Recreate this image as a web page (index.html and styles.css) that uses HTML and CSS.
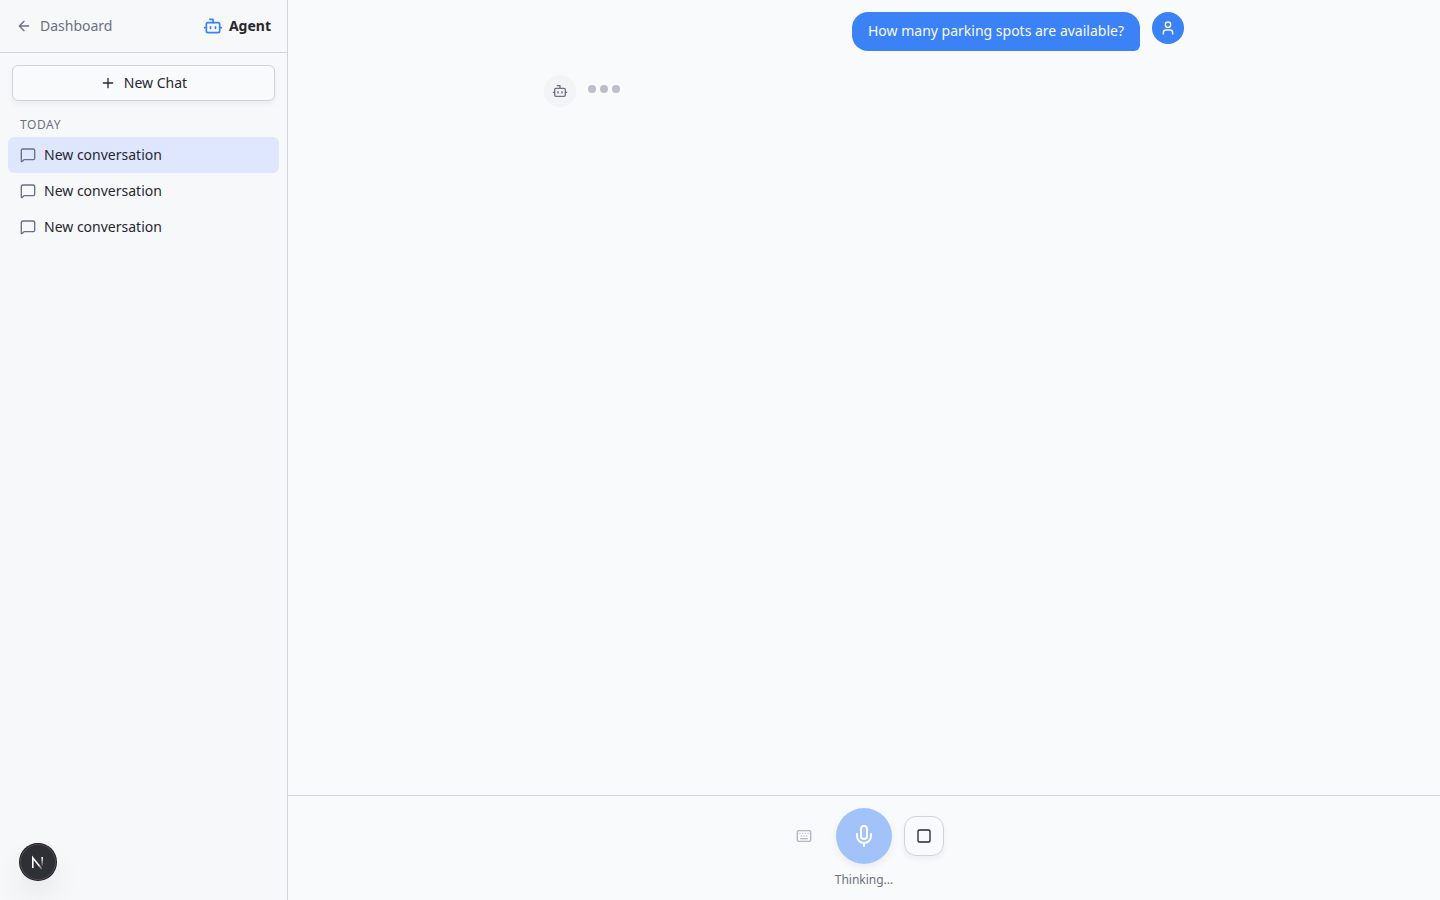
FILE: index.html
```html
<!DOCTYPE html>
<html lang="en">
<head>
<meta charset="utf-8">
<meta name="viewport" content="width=device-width, initial-scale=1">
<title>Agent</title>
<link rel="stylesheet" href="styles.css">
</head>
<body>
<svg class="sprite" aria-hidden="true">
  <symbol id="bot" viewBox="0 0 24 24"><path d="M12 8V4H8"/><rect width="16" height="12" x="4" y="8" rx="2"/><path d="M2 14h2M20 14h2M15 13v2M9 13v2"/></symbol>
  <symbol id="chat" viewBox="0 0 24 24"><path d="M22 17a2 2 0 0 1-2 2H6.828a2 2 0 0 0-1.414.586l-2.202 2.202A.71.71 0 0 1 2 21.286V5a2 2 0 0 1 2-2h16a2 2 0 0 1 2 2z"/></symbol>
</svg>
<div class="app">
  <aside class="sidebar">
    <header class="sidebar-header">
      <a class="back" href="#">
        <svg class="icon" viewBox="0 0 24 24" aria-hidden="true"><path d="m12 19-7-7 7-7M19 12H5"/></svg>
        Dashboard
      </a>
      <div class="brand">
        <svg class="icon icon-brand" aria-hidden="true"><use href="#bot"/></svg>
        Agent
      </div>
    </header>
    <div class="new-chat-wrap">
      <button class="new-chat" type="button">
        <svg class="icon" viewBox="0 0 24 24" aria-hidden="true"><path d="M5 12h14M12 5v14"/></svg>
        New Chat
      </button>
    </div>
    <nav class="history" aria-label="Conversations">
      <h2 class="history-label">Today</h2>
      <button class="conversation active" type="button"><svg class="icon icon-chat" aria-hidden="true"><use href="#chat"/></svg>New conversation</button>
      <button class="conversation" type="button"><svg class="icon icon-chat" aria-hidden="true"><use href="#chat"/></svg>New conversation</button>
      <button class="conversation" type="button"><svg class="icon icon-chat" aria-hidden="true"><use href="#chat"/></svg>New conversation</button>
    </nav>
  </aside>
  <main class="main">
    <div class="scroll">
      <div class="thread">
        <div class="message message-user">
          <p class="bubble">How many parking spots are available?</p>
          <span class="avatar avatar-user">
            <svg class="icon" viewBox="0 0 24 24" aria-hidden="true"><circle cx="12" cy="7" r="4"/><path d="M19 21v-2a4 4 0 0 0-4-4H9a4 4 0 0 0-4 4v2"/></svg>
          </span>
        </div>
        <div class="message">
          <span class="avatar avatar-bot"><svg class="icon" aria-hidden="true"><use href="#bot"/></svg></span>
          <div class="dots"><span class="dot"></span><span class="dot"></span><span class="dot"></span></div>
        </div>
      </div>
    </div>
    <footer class="composer">
      <div class="controls">
        <button class="control keyboard" type="button" disabled aria-label="Use keyboard">
          <svg class="icon" viewBox="0 0 24 24" aria-hidden="true"><rect width="20" height="16" x="2" y="4" rx="2"/><path d="M10 8h.01M12 12h.01M14 8h.01M16 12h.01M18 8h.01M6 8h.01M7 16h10M8 12h.01"/></svg>
        </button>
        <button class="mic" type="button" disabled aria-label="Record">
          <svg class="icon icon-mic" viewBox="0 0 24 24" aria-hidden="true"><path d="M12 2a3 3 0 0 0-3 3v7a3 3 0 0 0 6 0V5a3 3 0 0 0-3-3Z"/><path d="M19 10v2a7 7 0 0 1-14 0v-2M12 19v3"/></svg>
        </button>
        <button class="control stop" type="button" aria-label="Stop">
          <svg class="icon" viewBox="0 0 24 24" aria-hidden="true"><rect width="18" height="18" x="3" y="3" rx="2"/></svg>
        </button>
      </div>
      <p class="status">Thinking...</p>
    </footer>
  </main>
</div>
<button class="dev-badge" type="button" aria-label="Open developer tools">
  <svg class="dev-logo" viewBox="0 0 36 36" fill="none" aria-hidden="true">
    <defs>
      <linearGradient id="fade-stem" x1="0" y1="13" x2="0" y2="23" gradientUnits="userSpaceOnUse"><stop stop-color="#fff"/><stop offset="1" stop-color="#fff" stop-opacity="0"/></linearGradient>
      <linearGradient id="fade-leg" x1="18" y1="19" x2="23" y2="25" gradientUnits="userSpaceOnUse"><stop stop-color="#fff"/><stop offset="1" stop-color="#fff" stop-opacity="0.2"/></linearGradient>
    </defs>
    <path d="M12.8 24V13.8L19 21.4" stroke="#fff" stroke-width="1.6"/>
    <path d="M18.4 20.7L21.8 24.9" stroke="url(#fade-leg)" stroke-width="1.6"/>
    <rect x="21.4" y="13" width="1.6" height="9" fill="url(#fade-stem)"/>
  </svg>
</button>
</body>
</html>
```

FILE: styles.css
```css
* { box-sizing: border-box; }

body {
  margin: 0;
  background: #f9fafc;
  color: #27272f;
  font-family: "Noto Sans", sans-serif;
  font-size: 14px;
  line-height: 20px;
}

button { font: inherit; color: inherit; cursor: pointer; }
h2, p { margin: 0; }

.sprite { position: absolute; width: 0; height: 0; }

.icon {
  width: 16px;
  height: 16px;
  flex: none;
  fill: none;
  stroke: currentColor;
  stroke-width: 2;
  stroke-linecap: round;
  stroke-linejoin: round;
}
.icon-brand { width: 20px; height: 20px; color: #3b82f6; }
.icon-chat { color: #6b7083; }
.icon-mic { width: 24px; height: 24px; }

.app { display: flex; height: 100vh; }

.sidebar {
  display: flex;
  flex-direction: column;
  width: 288px;
  flex: none;
  background: #f7f8fa;
  border-right: 1px solid #d1d3dc;
}
.sidebar-header {
  display: flex;
  align-items: center;
  justify-content: space-between;
  padding: 16px;
  border-bottom: 1px solid #d1d3dc;
}
.back {
  display: flex;
  align-items: center;
  gap: 8px;
  color: #6b7083;
  text-decoration: none;
}
.brand { display: flex; align-items: center; gap: 6px; font-weight: 700; }

.new-chat-wrap { padding: 12px; }
.new-chat {
  display: flex;
  align-items: center;
  justify-content: center;
  gap: 8px;
  width: 100%;
  height: 36px;
  background: #f9fafc;
  border: 1px solid #d1d3dc;
  border-radius: 6px;
  box-shadow: 0 3px 6px rgb(0 0 0 / 5%);
}

.history { display: flex; flex-direction: column; padding: 0 8px; }
.history-label {
  padding: 4px 12px;
  color: #6b7083;
  font-size: 12px;
  font-weight: 400;
  letter-spacing: 0.05em;
  line-height: 16px;
  text-transform: uppercase;
}
.conversation {
  display: flex;
  align-items: center;
  gap: 8px;
  padding: 8px 12px;
  background: none;
  border: 0;
  border-radius: 6px;
  text-align: left;
}
.conversation.active { background: #dfe7ff; }

.main { display: flex; flex: 1; flex-direction: column; min-width: 0; }
.scroll { flex: 1; overflow-y: auto; padding: 12px 16px; }
.thread {
  display: flex;
  flex-direction: column;
  gap: 24px;
  max-width: 640px;
  margin: 0 auto;
}
.message { display: flex; align-items: flex-start; gap: 12px; }
.message-user { justify-content: flex-end; }
.bubble {
  padding: 8px 16px 9px;
  background: #3b82f6;
  border-radius: 16px 16px 6px 16px;
  color: #f9fafc;
  line-height: 22px;
}
.avatar {
  display: grid;
  place-items: center;
  width: 32px;
  height: 32px;
  flex: none;
  border-radius: 50%;
}
.avatar-user { background: #3b82f6; color: #f9fafc; }
.avatar-bot { background: #f3f4f6; color: #6b7083; }
.dots { display: flex; gap: 4px; padding: 10px 0; }
.dot { width: 8px; height: 8px; border-radius: 50%; background: #bbbeca; }

.composer {
  display: flex;
  flex-direction: column;
  align-items: center;
  gap: 8px;
  padding: 12px;
  border-top: 1px solid #d1d3dc;
}
.controls { display: flex; align-items: center; gap: 12px; }
.control {
  display: grid;
  place-items: center;
  width: 40px;
  height: 40px;
  padding: 0;
  background: none;
  border: 0;
  border-radius: 12px;
}
.keyboard { color: #6b7083; opacity: 0.5; }
.stop {
  background: #f9fafc;
  border: 1px solid #d1d3dc;
  box-shadow: 0 3px 6px rgb(0 0 0 / 5%);
}
.mic {
  display: grid;
  place-items: center;
  width: 56px;
  height: 56px;
  padding: 0;
  background: #3b82f6;
  border: 0;
  border-radius: 50%;
  box-shadow: 0 3px 6px rgb(0 0 0 / 12%);
  color: #fff;
  opacity: 0.45;
}
.status { color: #6b7083; font-size: 12px; line-height: 16px; }

.dev-badge {
  position: fixed;
  left: 20px;
  bottom: 20px;
  width: 36px;
  height: 36px;
  padding: 0;
  background: #2e3036;
  border: 0;
  border-radius: 50%;
  box-shadow: 0 0 0 1px #1b1b1f, inset 0 0 0 1px #54474f, 0 16px 32px -8px rgb(0 0 0 / 24%);
}
.dev-logo { display: block; width: 36px; height: 36px; }
```
